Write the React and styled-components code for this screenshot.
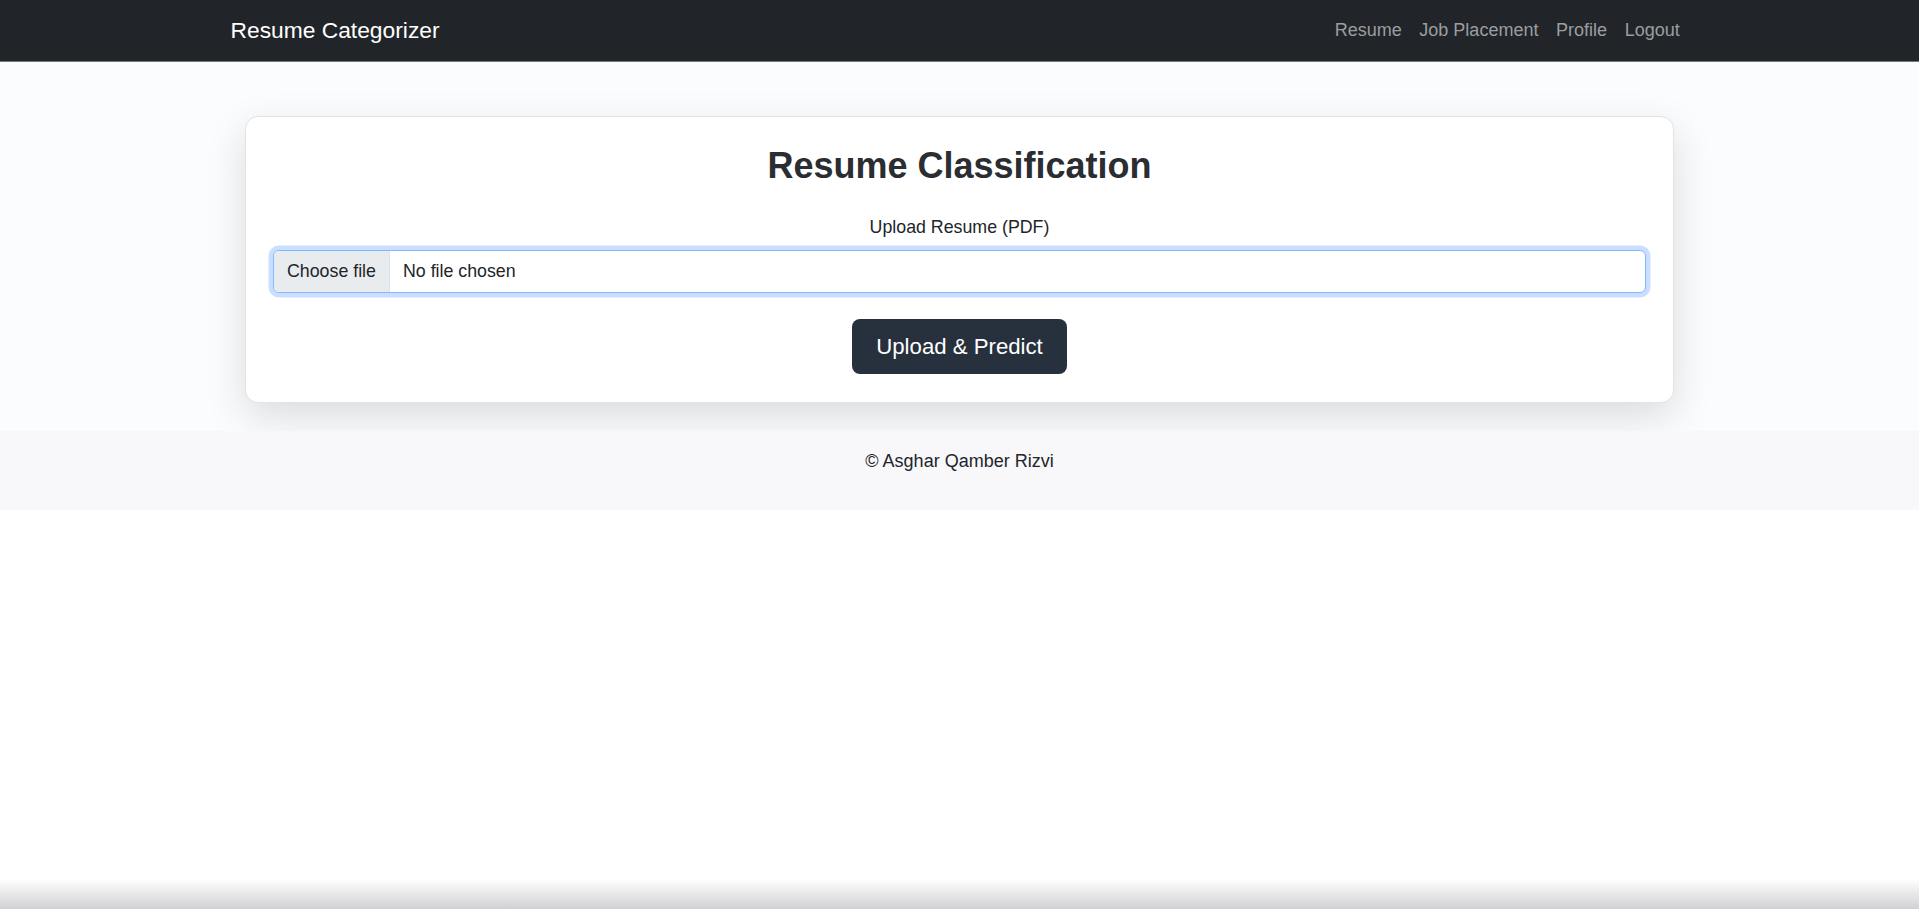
import React from "react";
import styled, { createGlobalStyle } from "styled-components";

const GlobalStyle = createGlobalStyle`
  html, body {
    margin: 0;
    padding: 0;
    background: #ffffff;
    font-family: "Liberation Sans", Arial, sans-serif;
    color: #212529;
  }
  * {
    box-sizing: border-box;
  }
`;

const Navbar = styled.nav`
  height: 62px;
  background: #212529;
  border-bottom: 1px solid #75787c;
`;

const NavInner = styled.div`
  width: 1490px;
  height: 100%;
  margin: 0 auto;
  padding: 0 16px;
  display: flex;
  align-items: center;
  justify-content: space-between;
`;

const Brand = styled.a`
  color: #ffffff;
  font-size: 22.8px;
  text-decoration: none;
`;

const NavLinks = styled.ul`
  display: flex;
  list-style: none;
  margin: 0;
  padding: 0;
`;

const NavLink = styled.a`
  display: block;
  padding: 8px 8.8px;
  color: #9c9da0;
  font-size: 18px;
  text-decoration: none;
`;

const Main = styled.main`
  background: #fbfcfd;
  padding: 54px 0 28px;
`;

const Card = styled.section`
  width: 1429px;
  margin: 0 auto;
  background: #ffffff;
  border: 1px solid #e2e3e6;
  border-radius: 13px;
  box-shadow: 0 14px 40px rgba(0, 0, 0, 0.13);
  padding: 28px 27px;
  text-align: center;
`;

const Title = styled.h2`
  margin: 0 0 27px;
  font-size: 36px;
  line-height: 42px;
  font-weight: 700;
  color: #2a2d32;
`;

const Label = styled.label`
  display: block;
  font-size: 17.8px;
  line-height: 26px;
  margin-bottom: 10px;
  color: #212529;
`;

const FileField = styled.div`
  display: flex;
  align-items: stretch;
  height: 43px;
  border: 1px solid #86b7fe;
  border-radius: 6px;
  box-shadow: 0 0 0 4.5px rgba(13, 110, 253, 0.22);
  overflow: hidden;
  background: #ffffff;
  font-size: 17.8px;
  text-align: left;
`;

const FileButton = styled.span`
  display: flex;
  align-items: center;
  padding: 0 13px;
  background: #e9ecef;
  border-right: 1px solid #dee2e6;
  color: #212529;
`;

const FileName = styled.span`
  display: flex;
  align-items: center;
  padding: 0 13px;
  color: #212529;
`;

const SubmitButton = styled.button`
  margin-top: 26px;
  height: 55px;
  padding: 0 24px;
  border: none;
  border-radius: 8px;
  background: #27313e;
  color: #ffffff;
  font-family: inherit;
  font-size: 22.2px;
  cursor: pointer;
`;

const Footer = styled.footer`
  background: #f8f8fb;
  padding: 17px 0 18px;
  text-align: center;
`;

const FooterText = styled.p`
  margin: 0 0 18px;
  font-size: 18px;
  line-height: 26px;
  color: #212529;
`;

const BottomShade = styled.div`
  position: fixed;
  left: 0;
  right: 0;
  bottom: 0;
  height: 30px;
  background: linear-gradient(to bottom, rgba(255, 255, 255, 0), #d1d0d4);
  pointer-events: none;
`;

const links = ["Resume", "Job Placement", "Profile", "Logout"];

const App = () => {
  return (
    <>
      <GlobalStyle />
      <Navbar>
        <NavInner>
          <Brand href="#">Resume Categorizer</Brand>
          <NavLinks>
            {links.map((l) => (
              <li key={l}>
                <NavLink href="#">{l}</NavLink>
              </li>
            ))}
          </NavLinks>
        </NavInner>
      </Navbar>

      <Main>
        <Card>
          <Title>Resume Classification</Title>
          <Label>Upload Resume (PDF)</Label>
          <FileField>
            <FileButton>Choose file</FileButton>
            <FileName>No file chosen</FileName>
          </FileField>
          <SubmitButton>Upload &amp; Predict</SubmitButton>
        </Card>
      </Main>

      <Footer>
        <FooterText>© Asghar Qamber Rizvi</FooterText>
      </Footer>

      <BottomShade />
    </>
  );
};

export default App;
